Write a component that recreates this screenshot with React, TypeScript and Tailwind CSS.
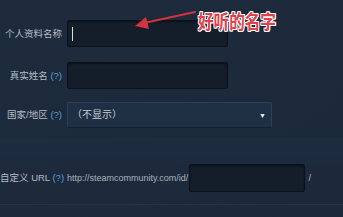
import React from "react";

const font = { fontFamily: '"Liberation Sans", "Noto Sans CJK SC", sans-serif' };

export default function App() {
  return (
    <div
      className="relative w-[343px] h-[217px] overflow-hidden bg-gradient-to-br from-[#1d2b3d] via-[#1c2a3c] to-[#1b293a] text-[#b3bcc6]"
      style={font}
    >
      <div className="flex flex-col pt-[20px]">
        {/* Row 1 */}
        <div className="flex items-center h-[27px]">
          <div className="w-[62px] text-right text-[9.5px] leading-none whitespace-nowrap">个人资料名称</div>
          <div className="ml-[5px] w-[161px] h-[27px] rounded-[2px] bg-[#141e2b] border border-[#0c121a] shadow-[inset_0_1px_2px_rgba(0,0,0,0.5)] flex items-center pl-[4px]">
            <div className="w-[1px] h-[14px] bg-[#d8dde2]" />
          </div>
        </div>
        {/* Row 2 */}
        <div className="flex items-center h-[27px] mt-[15px]">
          <div className="w-[62px] text-right text-[9.5px] leading-none whitespace-nowrap">
            真实姓名 <span className="text-[#5d9fd6]">(?)</span>
          </div>
          <div className="ml-[5px] w-[161px] h-[27px] rounded-[2px] bg-[#141e2b] border border-[#0c121a] shadow-[inset_0_1px_2px_rgba(0,0,0,0.5)]" />
        </div>
        {/* Row 3 */}
        <div className="flex items-center h-[26px] mt-[13px]">
          <div className="w-[62px] text-right text-[9.5px] leading-none whitespace-nowrap">
            国家/地区 <span className="text-[#5d9fd6]">(?)</span>
          </div>
          <div className="ml-[5px] w-[205px] h-[26px] rounded-[2px] bg-[#1f2f44] border border-[#2b4058] border-b-[#15202e] flex items-center justify-between pl-[4px] pr-[5px]">
            <span className="text-[10px] text-[#c5ccd3] leading-none">（不显示）</span>
            <span className="text-[7px] text-[#e6ebf0] leading-none">▼</span>
          </div>
        </div>
        {/* band */}
        <div className="mt-[10px] h-[26px] bg-gradient-to-b from-[#1e2d40] to-[#1b2a3c]" />
        {/* Row 4 */}
        <div className="flex items-center h-[28px]">
          <div className="w-[62px] text-right text-[9.5px] leading-none whitespace-nowrap">
            自定义 URL <span className="text-[#5d9fd6]">(?)</span>
          </div>
          <div className="ml-[5px] text-[9px] leading-none text-[#a9b3be] whitespace-nowrap">
            http://steamcommunity.com/id/
          </div>
          <div className="ml-[1px] w-[116px] h-[28px] rounded-[2px] bg-[#141e2b] border border-[#0c121a] shadow-[inset_0_1px_2px_rgba(0,0,0,0.5)]" />
          <div className="ml-[3px] text-[9px] leading-none">/</div>
        </div>
        <div className="mt-[12px] h-[1px] bg-[#23344a]" />
      </div>

      {/* annotation arrow */}
      <svg className="absolute left-0 top-0" width="343" height="217" viewBox="0 0 343 217">
        <line x1="195" y1="12" x2="144" y2="23" stroke="#d4343e" strokeWidth="2" strokeLinecap="round" />
        <polygon points="135,26 146,17 149,29" fill="#d4343e" />
      </svg>
      <div
        className="absolute left-[198px] top-[11px] text-[19px] font-bold leading-none text-[#e2404b] whitespace-nowrap origin-top-left scale-x-[0.82]"
        style={{
          fontFamily: '"Noto Sans CJK SC", sans-serif',
          textShadow:
            "1px 0 0 #fff, -1px 0 0 #fff, 0 1px 0 #fff, 0 -1px 0 #fff, 1px 1px 0 #fff, -1px -1px 0 #fff, 1px -1px 0 #fff, -1px 1px 0 #fff",
        }}
      >
        好听的名字
      </div>
    </div>
  );
}
